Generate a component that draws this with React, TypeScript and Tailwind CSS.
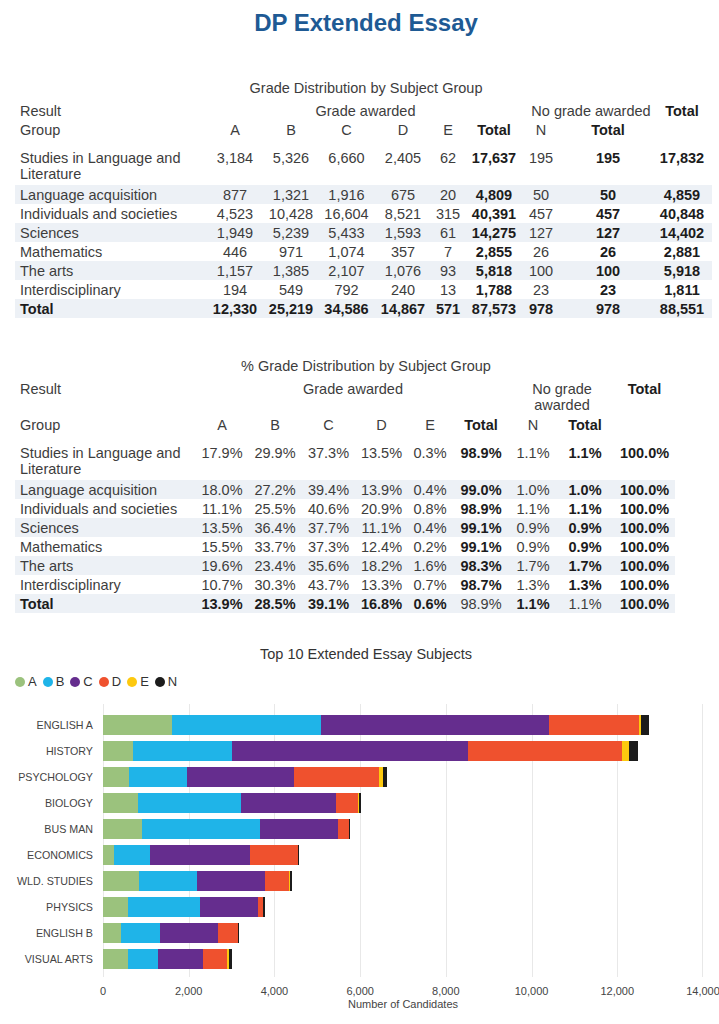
import React from "react";

type Row = { label: string[]; values: string[]; bold?: number[]; isTotal?: boolean };

const COLS_1 = "grid grid-cols-[192px_56px_56px_55px_58px_32px_60px_34px_100px_48px]";
const COLS_2 = "grid grid-cols-[181px_52px_54px_53px_53px_44px_58px_46px_58px_61px]";

const rowBold = [5, 7, 8];

const countRows: Row[] = [
  { label: ["Studies in Language and", "Literature"], values: ["3,184", "5,326", "6,660", "2,405", "62", "17,637", "195", "195", "17,832"] },
  { label: ["Language acquisition"], values: ["877", "1,321", "1,916", "675", "20", "4,809", "50", "50", "4,859"] },
  { label: ["Individuals and societies"], values: ["4,523", "10,428", "16,604", "8,521", "315", "40,391", "457", "457", "40,848"] },
  { label: ["Sciences"], values: ["1,949", "5,239", "5,433", "1,593", "61", "14,275", "127", "127", "14,402"] },
  { label: ["Mathematics"], values: ["446", "971", "1,074", "357", "7", "2,855", "26", "26", "2,881"] },
  { label: ["The arts"], values: ["1,157", "1,385", "2,107", "1,076", "93", "5,818", "100", "100", "5,918"] },
  { label: ["Interdisciplinary"], values: ["194", "549", "792", "240", "13", "1,788", "23", "23", "1,811"] },
  { label: ["Total"], values: ["12,330", "25,219", "34,586", "14,867", "571", "87,573", "978", "978", "88,551"], bold: [0, 1, 2, 3, 4, 5, 6, 7, 8], isTotal: true },
];

const pctRows: Row[] = [
  { label: ["Studies in Language and", "Literature"], values: ["17.9%", "29.9%", "37.3%", "13.5%", "0.3%", "98.9%", "1.1%", "1.1%", "100.0%"] },
  { label: ["Language acquisition"], values: ["18.0%", "27.2%", "39.4%", "13.9%", "0.4%", "99.0%", "1.0%", "1.0%", "100.0%"] },
  { label: ["Individuals and societies"], values: ["11.1%", "25.5%", "40.6%", "20.9%", "0.8%", "98.9%", "1.1%", "1.1%", "100.0%"] },
  { label: ["Sciences"], values: ["13.5%", "36.4%", "37.7%", "11.1%", "0.4%", "99.1%", "0.9%", "0.9%", "100.0%"] },
  { label: ["Mathematics"], values: ["15.5%", "33.7%", "37.3%", "12.4%", "0.2%", "99.1%", "0.9%", "0.9%", "100.0%"] },
  { label: ["The arts"], values: ["19.6%", "23.4%", "35.6%", "18.2%", "1.6%", "98.3%", "1.7%", "1.7%", "100.0%"] },
  { label: ["Interdisciplinary"], values: ["10.7%", "30.3%", "43.7%", "13.3%", "0.7%", "98.7%", "1.3%", "1.3%", "100.0%"] },
  { label: ["Total"], values: ["13.9%", "28.5%", "39.1%", "16.8%", "0.6%", "98.9%", "1.1%", "1.1%", "100.0%"], bold: [0, 1, 2, 3, 4, 6, 8], isTotal: true },
];

const gradeColors: Record<string, string> = {
  A: "#9bc27d",
  B: "#1fb4e8",
  C: "#652d8e",
  D: "#ef512e",
  E: "#fdc90f",
  N: "#1c1c1c",
};

// A, B, C, D, E, N counts read off the chart
const subjects: { name: string; counts: number[] }[] = [
  { name: "ENGLISH A", counts: [1620, 3470, 5320, 2100, 50, 170] },
  { name: "HISTORY", counts: [710, 2290, 5520, 3580, 180, 210] },
  { name: "PSYCHOLOGY", counts: [600, 1360, 2500, 1990, 90, 95] },
  { name: "BIOLOGY", counts: [824, 2404, 2216, 513, 20, 55] },
  { name: "BUS MAN", counts: [918, 2738, 1835, 242, 5, 35] },
  { name: "ECONOMICS", counts: [257, 832, 2341, 1112, 5, 20] },
  { name: "WLD. STUDIES", counts: [840, 1346, 1602, 552, 15, 48] },
  { name: "PHYSICS", counts: [576, 1680, 1353, 124, 5, 39] },
  { name: "ENGLISH B", counts: [420, 903, 1368, 452, 5, 25] },
  { name: "VISUAL ARTS", counts: [576, 700, 1065, 560, 46, 70] },
];

const PLOT_W = 600;
const MAX = 14000;
const ticks = [0, 2000, 4000, 6000, 8000, 10000, 12000, 14000];

function DataRow({ row, cols, width, shaded }: { row: Row; cols: string; width: string; shaded: boolean }) {
  const bold = row.bold ?? rowBold;
  const tall = row.label.length > 1;
  return (
    <div className={`${width} ${shaded ? "bg-[#edf1f6]" : ""}`}>
      <div className={`${cols} ${tall ? "h-[37px] items-start pt-[2px]" : "h-[19px] items-center"}`}>
        <div className={`pl-[5px] ${row.isTotal ? "font-bold text-[#1c1c1c]" : ""}`}>
          {row.label.map((l) => (
            <div key={l}>{l}</div>
          ))}
        </div>
        {row.values.map((v, i) => (
          <div key={i} className={`text-center whitespace-nowrap ${bold.includes(i) ? "font-bold text-[#1c1c1c]" : ""}`}>
            {v}
          </div>
        ))}
      </div>
    </div>
  );
}

function CountTable() {
  return (
    <div>
      <div className="h-[19px] leading-[19px] text-center mt-[42px]">Grade Distribution by Subject Group</div>
      <div className={`${COLS_1} h-[19px] items-center mt-[3px]`}>
        <div className="pl-[5px]">Result</div>
        <div className="col-span-6 text-center">Grade awarded</div>
        <div className="col-span-2 text-center whitespace-nowrap">No grade awarded</div>
        <div className="text-center font-bold text-[#1c1c1c]">Total</div>
      </div>
      <div className={`${COLS_1} h-[19px] items-center`}>
        <div className="pl-[5px]">Group</div>
        <div className="text-center">A</div>
        <div className="text-center">B</div>
        <div className="text-center">C</div>
        <div className="text-center">D</div>
        <div className="text-center">E</div>
        <div className="text-center font-bold text-[#1c1c1c]">Total</div>
        <div className="text-center">N</div>
        <div className="text-center font-bold text-[#1c1c1c]">Total</div>
        <div></div>
      </div>
      <div className="mt-[9px]">
        {countRows.map((r, i) => (
          <DataRow key={r.label[0]} row={r} cols={COLS_1} width="w-[697px]" shaded={i % 2 === 1} />
        ))}
      </div>
    </div>
  );
}

function PercentTable() {
  return (
    <div>
      <div className="h-[19px] leading-[19px] text-center mt-[39px]">% Grade Distribution by Subject Group</div>
      <div className={`${COLS_2} h-[34px] items-start mt-[5px]`}>
        <div className="pl-[5px]">Result</div>
        <div className="col-span-6 text-center">Grade awarded</div>
        <div className="col-span-2 text-center">
          No grade
          <br />
          awarded
        </div>
        <div className="text-center font-bold text-[#1c1c1c]">Total</div>
      </div>
      <div className={`${COLS_2} h-[19px] items-center`}>
        <div className="pl-[5px]">Group</div>
        <div className="text-center">A</div>
        <div className="text-center">B</div>
        <div className="text-center">C</div>
        <div className="text-center">D</div>
        <div className="text-center">E</div>
        <div className="text-center font-bold text-[#1c1c1c]">Total</div>
        <div className="text-center">N</div>
        <div className="text-center font-bold text-[#1c1c1c]">Total</div>
        <div></div>
      </div>
      <div className="mt-[9px]">
        {pctRows.map((r, i) => (
          <DataRow key={r.label[0]} row={r} cols={COLS_2} width="w-[660px]" shaded={i % 2 === 1} />
        ))}
      </div>
    </div>
  );
}

function SubjectsChart() {
  return (
    <div>
      <div className="h-[19px] leading-[19px] text-center mt-[32px] text-[#333]">Top 10 Extended Essay Subjects</div>
      <div className="flex items-center gap-[6px] h-[14px] mt-[11px] text-[13px] leading-[14px] text-[#333]">
        {Object.entries(gradeColors).map(([g, c]) => (
          <div key={g} className="flex items-center gap-[3px]">
            <span className="inline-block w-[10px] h-[10px] rounded-full" style={{ backgroundColor: c }} />
            <span>{g}</span>
          </div>
        ))}
      </div>

      <div className="flex mt-[15px]">
        <div className="w-[88px] pt-[8px] pb-[5px] text-[10.7px] text-[#444]">
          {subjects.map((s) => (
            <div key={s.name} className="h-[26px] flex items-center justify-end pr-[10px] whitespace-nowrap">
              {s.name}
            </div>
          ))}
        </div>
        <div className="relative w-[600px] pt-[8px] pb-[5px]">
          {ticks.map((t) => (
            <div
              key={t}
              className="absolute top-0 bottom-0 w-px bg-[#e8e8e8]"
              style={{ left: Math.min((t / MAX) * PLOT_W, PLOT_W - 1) }}
            />
          ))}
          {subjects.map((s) => (
            <div key={s.name} className="relative h-[26px] flex items-center">
              <div className="flex h-[20px]">
                {s.counts.map((n, i) => (
                  <div
                    key={i}
                    className="h-full"
                    style={{ width: (n / MAX) * PLOT_W, backgroundColor: Object.values(gradeColors)[i] }}
                  />
                ))}
              </div>
            </div>
          ))}
        </div>
      </div>

      <div className="flex">
        <div className="w-[88px]" />
        <div className="w-[600px]">
          <div className="relative h-[14px] mt-[7px] text-[11px] leading-[14px] text-[#444]">
            {ticks.map((t) => (
              <span
                key={t}
                className="absolute top-0 -translate-x-1/2 whitespace-nowrap"
                style={{ left: (t / MAX) * PLOT_W }}
              >
                {t.toLocaleString("en-US")}
              </span>
            ))}
          </div>
          <div className="h-[13px] leading-[13px] text-center text-[11px] text-[#444]">Number of Candidates</div>
        </div>
      </div>
    </div>
  );
}

export default function App() {
  return (
    <div className="w-[719px] min-h-[1024px] bg-white pl-[15px] pr-[2px] pt-[9px] pb-[12px] font-['Liberation_Sans',Arial,sans-serif] text-[14.5px] leading-[16px] text-[#3d3d3d]">
      <h1 className="h-[28px] leading-[28px] text-center text-[24px] font-bold text-[#1e5a94]">DP Extended Essay</h1>
      <CountTable />
      <PercentTable />
      <SubjectsChart />
    </div>
  );
}
